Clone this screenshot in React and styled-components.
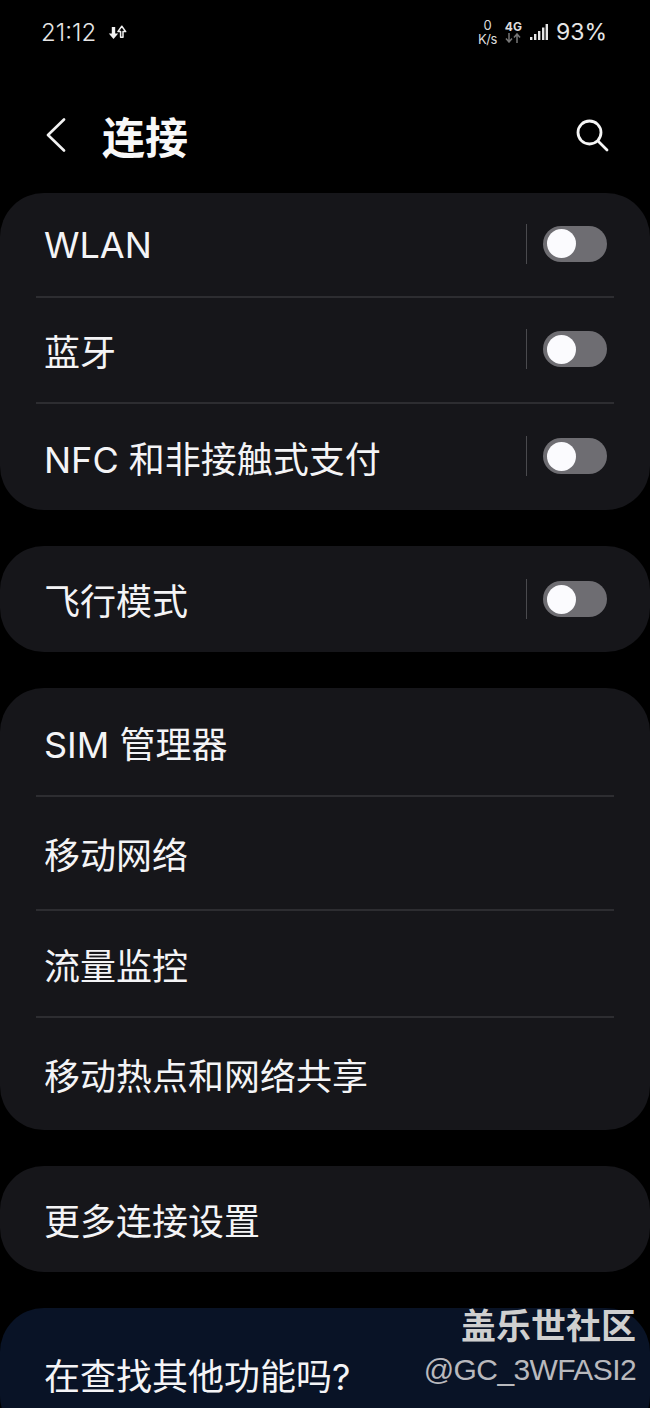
import React from "react";
import styled, { createGlobalStyle } from "styled-components";

const GlobalStyle = createGlobalStyle`
  html, body {
    margin: 0;
    padding: 0;
    background: #000000;
  }
`;

const FONT = `Inter, "Noto Sans CJK SC", sans-serif`;

const Screen = styled.div`
  position: relative;
  width: 650px;
  height: 1408px;
  overflow: hidden;
  background: #000000;
  color: #f4f4f6;
  font-family: ${FONT};
`;

const StatusBar = styled.div`
  display: flex;
  align-items: center;
  justify-content: space-between;
  height: 64px;
  padding: 0 43px 0 41px;
`;

const StatusGroup = styled.div`
  display: flex;
  align-items: center;
  gap: ${({ gap }) => gap || 8}px;
`;

const Clock = styled.span`
  font-size: 24px;
  font-weight: 300;
  color: #e6e6e6;
`;

const Speed = styled.div`
  display: flex;
  flex-direction: column;
  align-items: center;
  font-size: 13px;
  line-height: 14px;
  letter-spacing: -0.5px;
  color: #dddddd;
`;

const Network = styled.div`
  display: flex;
  flex-direction: column;
  align-items: center;
  font-size: 12px;
  line-height: 12px;
  font-weight: 700;
  color: #dddddd;
`;

const Battery = styled.span`
  font-size: 23px;
  color: #e6e6e6;
`;

const Header = styled.div`
  display: flex;
  align-items: center;
  box-sizing: border-box;
  height: 129px;
  padding: 12px 41px 0 46px;
`;

const BackButton = styled.div`
  display: flex;
  width: 56px;
`;

const Title = styled.h1`
  flex: 1;
  margin: 0;
  font-size: 43px;
  font-weight: 700;
  color: #f8f8f8;
`;

const Cards = styled.div`
  display: flex;
  flex-direction: column;
  gap: 36px;
`;

const Card = styled.section`
  border-radius: 44px;
  background: ${({ tint }) => tint || "#16161a"};
  padding: 0 36px;
`;

const Row = styled.div`
  display: flex;
  align-items: center;
  justify-content: space-between;
  box-sizing: border-box;
  height: ${({ h }) => h}px;
  border-bottom: ${({ last }) => (last ? "none" : "2px solid #2d2d31")};
`;

const Label = styled.span`
  padding-left: 8px;
  font-size: 36px;
  color: #f4f4f6;
  white-space: nowrap;
`;

const ToggleArea = styled.div`
  display: flex;
  align-items: center;
  gap: 16px;
  padding-right: 7px;
  padding-bottom: ${({ lift }) => (lift ? 2 : 0)}px;
`;

const Separator = styled.div`
  width: 1px;
  height: 40px;
  background: #4a4a4e;
`;

const Track = styled.div`
  display: flex;
  align-items: center;
  box-sizing: border-box;
  width: 64px;
  height: 36px;
  padding-left: 4px;
  border-radius: 18px;
  background: #6e6d72;
`;

const Thumb = styled.div`
  width: 29px;
  height: 29px;
  border-radius: 50%;
  background: #fbfbfe;
`;

const Watermark = styled.div`
  position: absolute;
  right: 14px;
  bottom: 17px;
  display: flex;
  flex-direction: column;
  align-items: flex-end;
`;

const WatermarkTitle = styled.span`
  font-size: 35px;
  line-height: 46px;
  font-weight: 700;
  color: #cfcfcf;
`;

const WatermarkHandle = styled.span`
  font-family: "Liberation Sans", sans-serif;
  font-size: 30px;
  line-height: 42px;
  letter-spacing: -0.6px;
  color: #b9b9bd;
`;

const Toggle = ({ lift }) => (
  <ToggleArea lift={lift}>
    <Separator />
    <Track>
      <Thumb />
    </Track>
  </ToggleArea>
);

const TransferIcon = () => (
  <svg width="19" height="15" viewBox="0 0 19 15">
    <path d="M3.8 2h3.4v6.5h3L5.5 14 .8 8.5h3z" fill="#f0f0f0" />
    <path d="M12.6 12.2V6.6H9.9L13.8 1.2l3.9 5.4H15v5.6z" fill="none" stroke="#f0f0f0" strokeWidth="1.5" strokeLinejoin="round" />
  </svg>
);

const NetArrows = () => (
  <svg width="16" height="10" viewBox="0 0 16 10" style={{ display: "block" }}>
    <path d="M4 0v8M1 5.5 4 9l3-3.5" fill="none" stroke="#777777" strokeWidth="1.5" />
    <path d="M12 10V2M9 4.5 12 1l3 3.5" fill="none" stroke="#777777" strokeWidth="1.5" />
  </svg>
);

const SignalIcon = () => (
  <svg width="18" height="18" viewBox="0 0 18 18">
    <rect x="0" y="14" width="2.4" height="3" fill="#e6e6e6" />
    <rect x="4" y="11" width="2.4" height="6" fill="#e6e6e6" />
    <rect x="8" y="8" width="2.4" height="9" fill="#e6e6e6" />
    <rect x="12" y="4.5" width="2.4" height="12.5" fill="#e6e6e6" />
    <rect x="15.6" y="1" width="2.4" height="16" fill="#e6e6e6" />
  </svg>
);

const BackIcon = () => (
  <svg width="20" height="34" viewBox="0 0 20 34">
    <path d="M18 1.5 2 17l16 15.5" fill="none" stroke="#f2f2f2" strokeWidth="2.6" strokeLinecap="round" strokeLinejoin="round" />
  </svg>
);

const SearchIcon = () => (
  <svg width="34" height="34" viewBox="0 0 34 34">
    <circle cx="14.5" cy="14.5" r="11.5" fill="none" stroke="#f6f6f6" strokeWidth="2.8" />
    <path d="M23 23l9 9" fill="none" stroke="#f6f6f6" strokeWidth="2.8" strokeLinecap="round" />
  </svg>
);

export default function App() {
  return (
    <Screen>
      <GlobalStyle />
      <StatusBar>
        <StatusGroup gap={12}>
          <Clock>21:12</Clock>
          <TransferIcon />
        </StatusGroup>
        <StatusGroup gap={8}>
          <Speed>
            <span>0</span>
            <span>K/s</span>
          </Speed>
          <Network>
            <span>4G</span>
            <NetArrows />
          </Network>
          <SignalIcon />
          <Battery>93%</Battery>
        </StatusGroup>
      </StatusBar>
      <Header>
        <BackButton>
          <BackIcon />
        </BackButton>
        <Title>连接</Title>
        <SearchIcon />
      </Header>
      <Cards>
        <Card>
          <Row h={105}>
            <Label>WLAN</Label>
            <Toggle lift />
          </Row>
          <Row h={106}>
            <Label>蓝牙</Label>
            <Toggle lift />
          </Row>
          <Row h={106} last>
            <Label>NFC 和非接触式支付</Label>
            <Toggle lift />
          </Row>
        </Card>
        <Card>
          <Row h={106} last>
            <Label>飞行模式</Label>
            <Toggle />
          </Row>
        </Card>
        <Card>
          <Row h={109}>
            <Label>SIM 管理器</Label>
          </Row>
          <Row h={114}>
            <Label>移动网络</Label>
          </Row>
          <Row h={107}>
            <Label>流量监控</Label>
          </Row>
          <Row h={112} last>
            <Label>移动热点和网络共享</Label>
          </Row>
        </Card>
        <Card>
          <Row h={106} last>
            <Label>更多连接设置</Label>
          </Row>
        </Card>
        <Card tint="#091326">
          <Row h={132} last>
            <Label>在查找其他功能吗?</Label>
          </Row>
        </Card>
      </Cards>
      <Watermark>
        <WatermarkTitle>盖乐世社区</WatermarkTitle>
        <WatermarkHandle>@GC_3WFASI2</WatermarkHandle>
      </Watermark>
    </Screen>
  );
}
